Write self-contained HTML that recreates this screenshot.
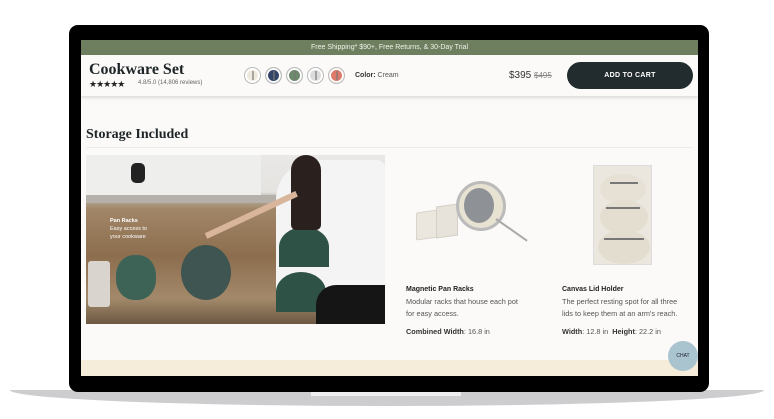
<!DOCTYPE html>
<html><head><style>
*{margin:0;padding:0;box-sizing:border-box}
body{width:774px;height:419px;background:#fff;position:relative;overflow:hidden;font-family:"Liberation Sans",sans-serif}
.a{position:absolute}
.serif{font-family:"Liberation Serif",serif;font-weight:bold;color:#1e2528}
.sw{position:absolute;top:27px;width:17px;height:17px;border-radius:50%;border:1px solid #bbb;box-shadow:inset 0 0 0 2px #fff}
.sw i{position:absolute;left:7px;top:3px;width:1.5px;height:9px;background:rgba(120,120,120,.6)}
.t{font-size:7px;color:#222;font-weight:bold}
.d{font-size:7.3px;color:#555;line-height:12px}
</style></head><body>
<div class="a" style="left:10px;top:390px;width:754px;height:16px;background:#cdcdcf;border-radius:0 0 50% 50%/0 0 100% 100%"></div>
<div class="a" style="left:311px;top:392px;width:150px;height:4px;background:#eeeef0"></div>
<div class="a" style="left:69px;top:25px;width:640px;height:367px;background:#000;border-radius:9px"></div>
<div class="a" style="left:81px;top:40px;width:617px;height:336px;background:#fbfaf8;overflow:hidden">
  <div class="a" style="left:0;top:0;width:617px;height:15px;background:#6d7f5f;color:#f2f2ea;font-size:7px;text-align:center;line-height:15px">Free Shipping* $90+, Free Returns, &amp; 30-Day Trial</div>
  <div class="a" style="left:0;top:15px;width:617px;height:41px;background:#fbfaf8;box-shadow:0 2px 3px rgba(0,0,0,.12)"></div>
  <div class="a serif" style="left:8px;top:21px;font-size:16px">Cookware Set</div>
  <div class="a" style="left:8px;top:39px;font-size:9px;color:#222;letter-spacing:-1px">★★★★★</div>
  <div class="a" style="left:57px;top:40px;font-size:6px;color:#666">4.8/5.0 (14,806 reviews)</div>
  <div class="sw" style="left:163px;background:#efe8dc"><i></i></div>
  <div class="sw" style="left:184px;background:#324566"><i></i></div>
  <div class="sw" style="left:205px;background:#6e8a6c"><i></i></div>
  <div class="sw" style="left:226px;background:#dcdcdc"><i></i></div>
  <div class="sw" style="left:247px;background:#dd7a6c"><i></i></div>
  <div class="a" style="left:274px;top:32px;font-size:7px;color:#555"><b style="color:#333">Color:</b> Cream</div>
  <div class="a" style="left:428px;top:30px;font-size:10px;color:#333">$395 <span style="font-size:8px;color:#888;text-decoration:line-through">$495</span></div>
  <div class="a" style="left:486px;top:22px;width:126px;height:27px;background:#222b2e;border-radius:14px;color:#fff;font-size:7px;font-weight:bold;text-align:center;line-height:27px;letter-spacing:.3px">ADD TO CART</div>
  <div class="a serif" style="left:5px;top:87px;font-size:14px">Storage Included</div>
  <div class="a" style="left:5px;top:107px;width:607px;height:1px;background:#ececec"></div>
  <div class="a" style="left:5px;top:115px;width:299px;height:169px;background:linear-gradient(180deg,#e9e8e6 0,#e4e3e0 22%,#b9b2a6 25%,#a18667 32%,#8c6e4e 60%,#a3896a 85%,#6b5743 100%);overflow:hidden">
    <div class="a" style="left:0;top:0;width:175px;height:45px;background:#eeeeec"></div>
    <div class="a" style="left:0;top:40px;width:190px;height:8px;background:#b5b0a9"></div>
    <div class="a" style="left:45px;top:8px;width:14px;height:20px;border-radius:5px;background:#222"></div>
    <div class="a" style="left:95px;top:90px;width:50px;height:55px;border-radius:50%;background:#3f5552"></div>
    <div class="a" style="left:30px;top:100px;width:40px;height:45px;border-radius:45%;background:#3d6357"></div>
    <div class="a" style="left:2px;top:106px;width:22px;height:46px;background:#d9d5ce;border-radius:3px"></div>
    <div class="a" style="left:190px;top:5px;width:110px;height:140px;background:#f4f4f4;border-radius:40px 10px 0 0"></div>
    <div class="a" style="left:193px;top:72px;width:50px;height:40px;border-radius:50% 50% 0 0;background:#2f5246"></div>
    <div class="a" style="left:190px;top:117px;width:50px;height:40px;border-radius:50% 50% 0 0;background:#2f5246"></div>
    <div class="a" style="left:205px;top:0;width:30px;height:75px;background:#2a211e;border-radius:15px 15px 5px 5px"></div>
    <div class="a" style="left:230px;top:130px;width:70px;height:39px;background:#151515;border-radius:20px 0 0 0"></div>
    <div class="a" style="left:120px;top:78px;width:100px;height:6px;background:#d8b59b;transform:rotate(-25deg);transform-origin:left"></div>
    <div class="a" style="left:24px;top:62px;font-size:5.5px;color:#fff;line-height:8px"><b>Pan Racks</b><br>Easy access to<br>your cookware</div>
  </div>
  <div class="a" style="left:335px;top:133px;width:110px;height:70px">
    <div class="a" style="left:0;top:38px;width:22px;height:28px;background:#ebe7df;border:1px solid #d8d4cc;border-radius:2px;transform:skewY(-8deg)"></div>
    <div class="a" style="left:20px;top:32px;width:22px;height:32px;background:#e7e3db;border:1px solid #d4d0c8;transform:skewY(-8deg)"></div>
    <div class="a" style="left:40px;top:8px;width:50px;height:50px;border-radius:50%;background:#e8e2d3;border:3px solid #bbb"></div>
    <div class="a" style="left:48px;top:15px;width:30px;height:35px;border-radius:50%;background:#8e9296"></div>
    <div class="a" style="left:80px;top:45px;width:38px;height:2px;background:#aaa;transform:rotate(35deg);transform-origin:left"></div>
  </div>
  <div class="a" style="left:512px;top:125px;width:59px;height:100px;background:#ebe7df;border:1px solid #ddd">
    <div class="a" style="left:6px;top:8px;width:46px;height:30px;border-radius:50%;background:#e7e1d5"></div>
    <div class="a" style="left:6px;top:34px;width:48px;height:34px;border-radius:50%;background:#e4ded1"></div>
    <div class="a" style="left:4px;top:64px;width:52px;height:34px;border-radius:50%;background:#e3ddd0"></div>
    <div class="a" style="left:16px;top:16px;width:28px;height:2px;background:#777"></div>
    <div class="a" style="left:12px;top:41px;width:34px;height:2px;background:#777"></div>
    <div class="a" style="left:10px;top:72px;width:40px;height:2px;background:#777"></div>
  </div>
  <div class="a t" style="left:325px;top:246px">Magnetic Pan Racks</div>
  <div class="a d" style="left:325px;top:256px">Modular racks that house each pot<br>for easy access.</div>
  <div class="a d" style="left:325px;top:286px"><b style="color:#333">Combined Width</b>: 16.8 in</div>
  <div class="a t" style="left:481px;top:246px">Canvas Lid Holder</div>
  <div class="a d" style="left:481px;top:256px">The perfect resting spot for all three<br>lids to keep them at an arm's reach.</div>
  <div class="a d" style="left:481px;top:286px"><b style="color:#333">Width</b>: 12.8 in &nbsp;<b style="color:#333">Height</b>: 22.2 in</div>
  <div class="a" style="left:0;top:320px;width:617px;height:16px;background:#f5ecd9"></div>
  <div class="a" style="left:587px;top:301px;width:30px;height:30px;border-radius:50%;background:#a9c4cf;font-size:5px;color:#223;text-align:center;line-height:30px">CHAT</div>
</div>
</body></html>
